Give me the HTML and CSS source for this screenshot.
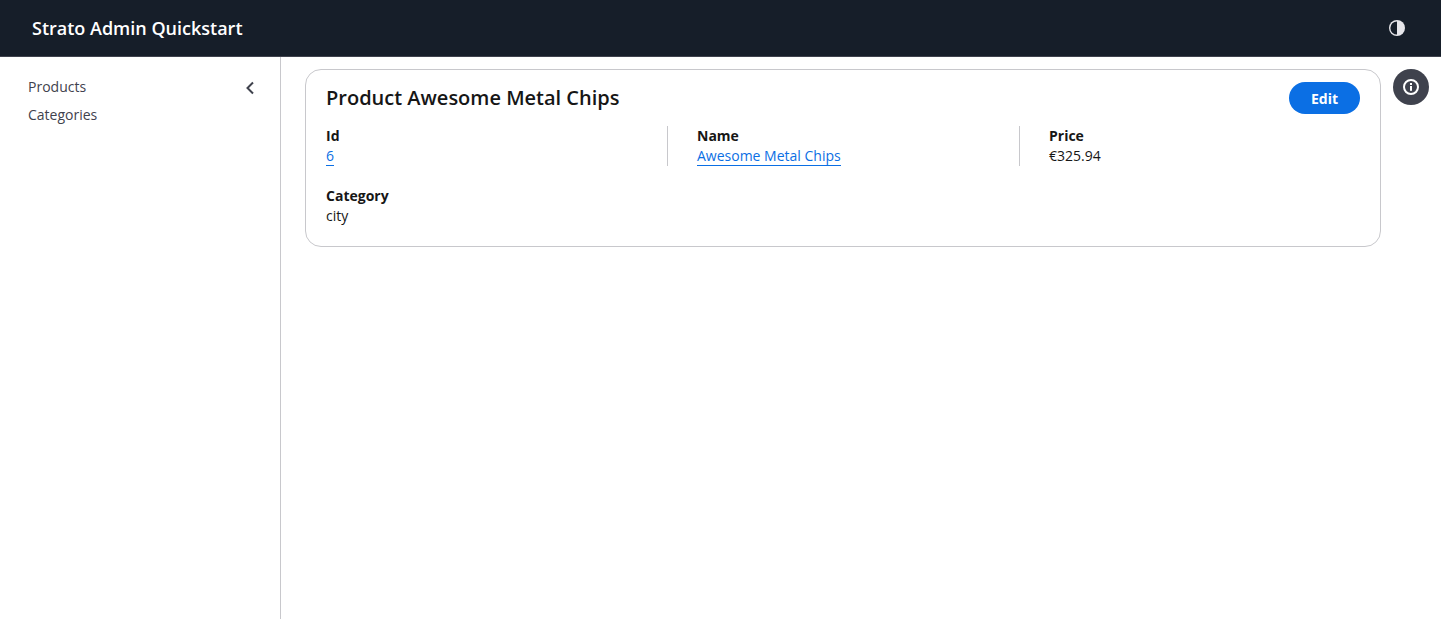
FILE: index.html
```html
<!DOCTYPE html>
<html lang="en">
<head>
  <meta charset="UTF-8" />
  <meta name="viewport" content="width=device-width, initial-scale=1.0"/>
  <title>Strato Admin Quickstart</title>
  <link rel="stylesheet" href="styles.css">
</head>
<body>

<header class="topbar">
  <h1 class="brand">Strato Admin Quickstart</h1>
  <button class="theme-btn" aria-label="Toggle theme">
    <svg width="16" height="16" viewBox="0 0 16 16">
      <circle cx="8" cy="8" r="8" fill="#e6e6ea"/>
      <path d="M8 1.4a6.6 6.6 0 0 0 0 13.2z" fill="#161e29"/>
    </svg>
  </button>
</header>

<div class="layout">
  <aside class="sidebar">
    <nav class="nav">
      <a class="nav-link" href="#">Products</a>
      <a class="nav-link" href="#">Categories</a>
    </nav>
    <button class="collapse-btn" aria-label="Collapse">
      <svg width="10" height="14" viewBox="0 0 10 14">
        <path d="M8 1.5 2.5 7 8 12.5" fill="none" stroke="#3f424d" stroke-width="2"/>
      </svg>
    </button>
  </aside>

  <main class="content">
    <section class="card">
      <div class="card-head">
        <h2 class="card-title">Product Awesome Metal Chips</h2>
        <button class="edit-btn">Edit</button>
      </div>
      <div class="fields">
        <div class="field">
          <div class="field-label">Id</div>
          <div class="field-value"><a href="#">6</a></div>
        </div>
        <div class="field">
          <div class="field-label">Name</div>
          <div class="field-value"><a href="#">Awesome Metal Chips</a></div>
        </div>
        <div class="field">
          <div class="field-label">Price</div>
          <div class="field-value">€325.94</div>
        </div>
        <div class="field">
          <div class="field-label">Category</div>
          <div class="field-value">city</div>
        </div>
      </div>
    </section>

    <button class="info-btn" aria-label="Info">
      <svg width="16" height="16" viewBox="0 0 16 16">
        <circle cx="8" cy="8" r="7" fill="none" stroke="#fff" stroke-width="2"/>
        <rect x="7" y="7" width="2" height="4.8" fill="#fff"/>
        <rect x="7" y="4" width="2" height="2" fill="#fff"/>
      </svg>
    </button>
  </main>
</div>

</body>
</html>
```

FILE: styles.css
```css
* { box-sizing: border-box; }
body {
  margin: 0; font-family: "Open Sans", "Noto Sans", sans-serif; font-size: 14px;
  color: #161616; background: #fff; height: 619px; overflow: hidden;
}
button { border: none; background: none; padding: 0; cursor: pointer; font-family: inherit; }

.topbar {
  height: 57px; background: #161e29; border-bottom: 1px solid #3f424d;
  display: flex; justify-content: space-between; align-items: center;
  padding: 0 36px 0 32px;
}
.brand { margin: 0; font-size: 18px; font-weight: 645; line-height: 24px; color: #fff; }
.theme-btn { display: flex; }

.layout { display: flex; height: 562px; }

.sidebar {
  width: 281px; border-right: 1px solid #c8c8cc;
  display: flex; justify-content: space-between; align-items: flex-start;
  padding: 20px 25px 0 28px;
}
.nav { display: flex; flex-direction: column; gap: 8px; }
.nav-link { color: #3f424d; text-decoration: none; line-height: 20px; }
.collapse-btn { display: flex; margin-top: 4px; }

.content {
  flex: 1; display: flex; align-items: flex-start; gap: 12px;
  padding: 12px 12px 0 24px;
}
.card {
  flex: 1; height: 178px; border: 1px solid #c8c8cc; border-radius: 16px;
  padding: 12px 20px;
}
.card-head { display: flex; justify-content: space-between; align-items: center; margin-bottom: 12px; }
.card-title { margin: 0; font-size: 20px; font-weight: 615; line-height: 32px; }
.edit-btn {
  width: 71px; height: 32px; border-radius: 16px;
  background: #0b6fe4; color: #fff; font-size: 14px; font-weight: 700;
}

.fields { display: grid; grid-template-columns: 341px 352px 1fr; row-gap: 20px; }
.field { height: 40px; padding-left: 29px; border-left: 1px solid #c8c8cc; line-height: 20px; }
.field:nth-child(3n+1) { padding-left: 0; border-left: none; }
.field-label { font-weight: 700; }
.field-value a { color: #0b6fe4; text-decoration: none; border-bottom: 1px solid #0b6fe4; }

.info-btn {
  width: 36px; height: 36px; border-radius: 50%; background: #3f424d;
  display: flex; align-items: center; justify-content: center; flex-shrink: 0;
}
```
